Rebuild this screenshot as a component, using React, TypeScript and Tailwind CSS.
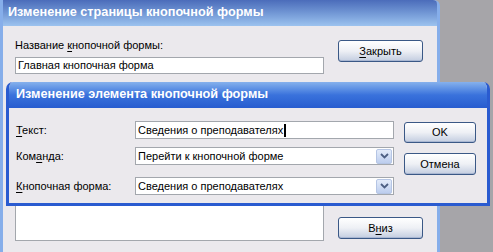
import type { ReactNode } from 'react'

const font = { fontFamily: '"Liberation Sans", Tahoma, Arial, sans-serif' }
const titleFont = { fontFamily: '"Liberation Sans", Arial, sans-serif' }

function XpButton({ children, className = '' }: { children: ReactNode; className?: string }) {
  return (
    <div
      className={`flex items-center justify-center rounded-[3px] border border-[#3a5886] bg-linear-to-b from-[#ffffff] via-[#eef0f5] to-[#c3cde0] text-[11px] text-black shadow-[inset_0_-1px_0_#a9b7d2] ${className}`}
    >
      {children}
    </div>
  )
}

function Combo({ value }: { value: string }) {
  return (
    <div className="flex h-[18px] w-[259px] items-center border border-[#a3a7ad] bg-white pl-[1px] pr-[1px]">
      <span className="flex-1 pl-[1px] text-[11px] leading-none text-black">{value}</span>
      <div className="flex h-[15px] w-[16px] items-center justify-center rounded-[2px] border border-[#b5c5e4] bg-linear-to-b from-[#e4ecfa] to-[#bccdee]">
        <svg width="9" height="6" viewBox="0 0 9 6">
          <polyline points="1,1 4.5,4.5 8,1" fill="none" stroke="#4d5f83" strokeWidth="1.8" />
        </svg>
      </div>
    </div>
  )
}

function BackWindow() {
  return (
    <div className="absolute left-0 top-0 h-[270px] w-[440px] rounded-tr-[6px] border-x-[3px] border-[#86aeea] bg-[#ebe9ed]">
      <div className="flex h-[26px] items-center rounded-tr-[4px] bg-linear-to-b from-[#4b6cba] to-[#9cc3ef] pl-[5px]">
        <span className="text-[12.7px] font-bold text-white" style={titleFont}>
          Изменение страницы кнопочной формы
        </span>
      </div>
      <div className="flex gap-[14px] pl-[12px] pr-[13px]">
        <div className="flex w-[309px] flex-col">
          <div className="mt-[12px] h-[14px] text-[11px] leading-[14px] text-black">
            Название <u className="underline-offset-2">к</u>нопочной формы:
          </div>
          <div className="mt-[5px] flex h-[17px] items-center border border-[#a3a7ad] bg-white pl-[2px] text-[11px] text-black">
            Главная кнопочная форма
          </div>
          <div className="mt-[29px] h-[138px] border border-[#a3a7ad] bg-white" />
        </div>
        <div className="flex w-[85px] flex-col">
          <XpButton className="mt-[14px] h-[22px]">
            <span><u className="underline-offset-2">З</u>акрыть</span>
          </XpButton>
          <div className="h-[155px]" />
          <XpButton className="h-[22px]">
            <span>В<u className="underline-offset-2">н</u>из</span>
          </XpButton>
        </div>
      </div>
    </div>
  )
}

function FrontWindow() {
  return (
    <div className="absolute left-[6px] top-[82px] h-[124px] w-[484px] overflow-hidden rounded-t-[7px] border-[3px] border-t-0 border-[#2a5bd0] bg-[#ebe9ed]">
      <div className="-mx-[3px] flex h-[26px] items-center bg-linear-to-b from-[#86b1ec] via-[#3a72dc] to-[#275ccf] pl-[10px]">
        <span className="text-[12.7px] font-bold text-white" style={titleFont}>
          Изменение элемента кнопочной формы
        </span>
      </div>
      <div className="flex pl-[7px] pr-[10px]">
        <div className="flex flex-col">
          <div className="mt-[13px] flex items-center">
            <div className="w-[119px] text-[11px] text-black">
              <u className="underline-offset-2">Т</u>екст:
            </div>
            <div className="flex h-[18px] w-[259px] items-center border border-[#a3a7ad] bg-white pl-[2px] text-[11px] text-black">
              Сведения о преподавателях
              <span className="ml-[1px] inline-block h-[13px] w-[2px] bg-black" />
            </div>
          </div>
          <div className="mt-[8px] flex items-center">
            <div className="w-[119px] text-[11px] text-black">
              Ком<u className="underline-offset-2">а</u>нда:
            </div>
            <Combo value="Перейти к кнопочной форме" />
          </div>
          <div className="mt-[12px] flex items-center">
            <div className="w-[119px] text-[11px] text-black">
              <u className="underline-offset-2">К</u>нопочная форма:
            </div>
            <Combo value="Сведения о преподавателях" />
          </div>
        </div>
        <div className="ml-[10px] flex w-[72px] flex-col">
          <XpButton className="mt-[14px] h-[21px]">OK</XpButton>
          <XpButton className="mt-[10px] h-[22px]">Отмена</XpButton>
        </div>
      </div>
    </div>
  )
}

export default function App() {
  return (
    <div className="relative h-[252px] w-[493px] overflow-hidden bg-[#a6a5a9]" style={font}>
      <BackWindow />
      <FrontWindow />
    </div>
  )
}
